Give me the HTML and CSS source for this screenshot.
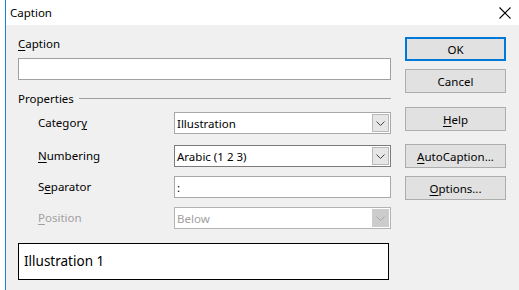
FILE: index.html
```html
<!DOCTYPE html>
<html lang="en">
<head>
  <meta charset="UTF-8">
  <title>Caption</title>
  <link rel="stylesheet" href="styles.css">
</head>
<body>
  <div class="window">
    <div class="titlebar">
      <span class="title">Caption</span>
      <svg class="close" width="12" height="12" viewBox="0 0 12 12">
        <path d="M0.5 0.5 L11.5 11.5 M11.5 0.5 L0.5 11.5" stroke="#000" stroke-width="1.1" fill="none"/>
      </svg>
    </div>

    <div class="content">
      <!-- left column -->
      <div class="main">
        <div class="label top-label"><u>C</u>aption</div>
        <div class="textbox"></div>

        <div class="group-head">
          <span>Properties</span>
          <div class="rule"></div>
        </div>

        <div class="row row-category">
          <div class="label indent">Categor<u>y</u></div>
          <div class="combo">
            <span class="value">Illustration</span>
            <span class="drop"><svg width="9" height="5" viewBox="0 0 9 5"><path d="M0.5 0.5 L4.5 4.5 L8.5 0.5" stroke="#444" fill="none"/></svg></span>
          </div>
        </div>

        <div class="row row-numbering">
          <div class="label indent"><u>N</u>umbering</div>
          <div class="combo focus">
            <span class="value">Arabic (1 2 3)</span>
            <span class="drop"><svg width="9" height="5" viewBox="0 0 9 5"><path d="M0.5 0.5 L4.5 4.5 L8.5 0.5" stroke="#444" fill="none"/></svg></span>
          </div>
        </div>

        <div class="row row-separator">
          <div class="label indent">S<u>e</u>parator</div>
          <div class="combo">
            <span class="value">:</span>
          </div>
        </div>

        <div class="row row-position">
          <div class="label indent disabled"><u>P</u>osition</div>
          <div class="combo is-disabled">
            <span class="value">Below</span>
            <span class="drop"><svg width="9" height="5" viewBox="0 0 9 5"><path d="M0.5 0.5 L4.5 4.5 L8.5 0.5" stroke="#a8a8a8" fill="none"/></svg></span>
          </div>
        </div>

        <div class="preview">Illustration 1</div>
      </div>

      <!-- buttons -->
      <div class="buttons">
        <div class="btn default">OK</div>
        <div class="btn btn-cancel">Cancel</div>
        <div class="btn btn-help"><u>H</u>elp</div>
        <div class="btn btn-auto"><u>A</u>utoCaption...</div>
        <div class="btn btn-options"><u>O</u>ptions...</div>
      </div>
    </div>
  </div>
</body>
</html>
```

FILE: styles.css
```css
html, body {
  margin: 0;
  height: 100%;
  background: #fff;
}
body {
  padding-left: 5px;
  font-family: "Segoe UI", "Noto Sans", "DejaVu Sans", sans-serif;
  font-size: 11.5px;
  color: #000;
  overflow: hidden;
}
u {
  text-decoration: underline;
  text-underline-offset: 2px;
}
.window {
  border-left: 1px solid #1883d7;
  height: 290px;
  background: #f0f0f0;
}
.titlebar {
  height: 25px;
  background: #fff;
  display: flex;
  align-items: center;
  justify-content: space-between;
  padding: 0 8px 0 4px;
}
.title {
  font-size: 11.5px;
}
.close {
  margin-top: 1px;
}
.content {
  display: flex;
  padding-left: 12px;
}
.main {
  width: 373px;
  display: flex;
  flex-direction: column;
}
.label {
  line-height: 16px;
}
.top-label {
  margin-top: 11px;
}
.textbox {
  margin-top: 6px;
  height: 20px;
  border: 1px solid #a0a0a0;
  background: #fff;
}
.group-head {
  display: flex;
  align-items: center;
  margin-top: 10px;
  height: 16px;
}
.rule {
  flex: 1;
  height: 1px;
  background: #a0a0a0;
  margin-left: 5px;
}
.row {
  display: flex;
  align-items: center;
  height: 22px;
}
.row-category { margin-top: 6px; }
.row-numbering { margin-top: 11px; }
.row-separator { margin-top: 9px; }
.row-position { margin-top: 9px; }
.indent {
  width: 136px;
  padding-left: 20px;
}
.label.disabled {
  color: #a0a0a0;
}
.combo {
  flex: 1;
  height: 20px;
  border: 1px solid #a9a9a9;
  background: #fff;
  display: flex;
  align-items: center;
  justify-content: space-between;
  padding-left: 2px;
}
.combo.focus {
  border-color: #7a7a7a;
}
.combo.is-disabled {
  color: #a0a0a0;
  border-color: #b4b4b4;
}
.drop {
  width: 15px;
  height: 16px;
  margin-right: 1px;
  border: 1px solid #b8b8b8;
  background: #e6e6e6;
  display: flex;
  align-items: center;
  justify-content: center;
}
.is-disabled .drop {
  background: #cccccc;
  border-color: #cccccc;
}
.preview {
  margin-top: 14px;
  width: 364px;
  height: 35px;
  border: 1px solid #000;
  background: #fff;
  font-size: 13.5px;
  line-height: 35px;
  padding-left: 5px;
}
.buttons {
  margin-left: 14px;
  width: 101px;
  display: flex;
  flex-direction: column;
}
.btn {
  height: 22px;
  border: 1px solid #adadad;
  background: #e1e1e1;
  display: flex;
  align-items: center;
  justify-content: center;
}
.btn.default {
  margin-top: 12px;
  height: 20px;
  border: 2px solid #0078d7;
}
.btn-cancel { margin-top: 8px; }
.btn-help { margin-top: 14px; }
.btn-auto { margin-top: 13px; }
.btn-options { margin-top: 8px; }
```
